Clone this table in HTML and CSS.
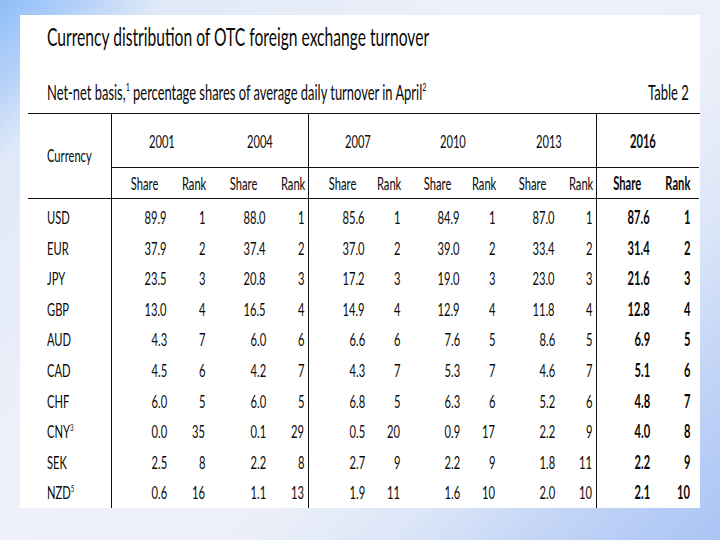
FILE: index.html
```html
<!DOCTYPE html>
<html lang="en">
<head>
<meta charset="utf-8">
<title>Currency distribution of OTC foreign exchange turnover</title>
<link rel="stylesheet" href="styles.css">
</head>
<body>
<div class="panel">
  <h1 class="title"><span class="sq">Currency distribution of OTC foreign exchange turnover</span></h1>
  <div class="sub">
    <span class="sq lt">Net-net basis,<sup>1</sup> percentage shares of average daily turnover in April<sup>2</sup></span>
    <span class="sq rt">Table 2</span>
  </div>
  <div class="table">
    <div class="head">
      <div class="cur"><span class="sq">Currency</span></div>
      <div class="yr"><span class="sq">2001</span></div>
      <div class="yr"><span class="sq">2004</span></div>
      <div class="yr"><span class="sq">2007</span></div>
      <div class="yr"><span class="sq">2010</span></div>
      <div class="yr"><span class="sq">2013</span></div>
      <div class="yr y16 b"><span class="sq">2016</span></div>
      <div class="hd"><span class="sq">Share</span></div><div class="hd k"><span class="sq">Rank</span></div>
      <div class="hd"><span class="sq">Share</span></div><div class="hd k"><span class="sq">Rank</span></div>
      <div class="hd"><span class="sq">Share</span></div><div class="hd k"><span class="sq">Rank</span></div>
      <div class="hd"><span class="sq">Share</span></div><div class="hd k"><span class="sq">Rank</span></div>
      <div class="hd"><span class="sq">Share</span></div><div class="hd k"><span class="sq">Rank</span></div>
      <div class="hd b"><span class="sq">Share</span></div><div class="hd k kl b"><span class="sq">Rank</span></div>
    </div>
    <div class="body">
      <div class="c"><span class="sq">USD</span></div>
      <div class="n"><span class="sq">89.9</span></div><div class="n"><span class="sq">1</span></div>
      <div class="n"><span class="sq">88.0</span></div><div class="n"><span class="sq">1</span></div>
      <div class="n"><span class="sq">85.6</span></div><div class="n"><span class="sq">1</span></div>
      <div class="n"><span class="sq">84.9</span></div><div class="n"><span class="sq">1</span></div>
      <div class="n"><span class="sq">87.0</span></div><div class="n"><span class="sq">1</span></div>
      <div class="n b"><span class="sq">87.6</span></div><div class="n nl b"><span class="sq">1</span></div>

      <div class="c"><span class="sq">EUR</span></div>
      <div class="n"><span class="sq">37.9</span></div><div class="n"><span class="sq">2</span></div>
      <div class="n"><span class="sq">37.4</span></div><div class="n"><span class="sq">2</span></div>
      <div class="n"><span class="sq">37.0</span></div><div class="n"><span class="sq">2</span></div>
      <div class="n"><span class="sq">39.0</span></div><div class="n"><span class="sq">2</span></div>
      <div class="n"><span class="sq">33.4</span></div><div class="n"><span class="sq">2</span></div>
      <div class="n b"><span class="sq">31.4</span></div><div class="n nl b"><span class="sq">2</span></div>

      <div class="c"><span class="sq">JPY</span></div>
      <div class="n"><span class="sq">23.5</span></div><div class="n"><span class="sq">3</span></div>
      <div class="n"><span class="sq">20.8</span></div><div class="n"><span class="sq">3</span></div>
      <div class="n"><span class="sq">17.2</span></div><div class="n"><span class="sq">3</span></div>
      <div class="n"><span class="sq">19.0</span></div><div class="n"><span class="sq">3</span></div>
      <div class="n"><span class="sq">23.0</span></div><div class="n"><span class="sq">3</span></div>
      <div class="n b"><span class="sq">21.6</span></div><div class="n nl b"><span class="sq">3</span></div>

      <div class="c"><span class="sq">GBP</span></div>
      <div class="n"><span class="sq">13.0</span></div><div class="n"><span class="sq">4</span></div>
      <div class="n"><span class="sq">16.5</span></div><div class="n"><span class="sq">4</span></div>
      <div class="n"><span class="sq">14.9</span></div><div class="n"><span class="sq">4</span></div>
      <div class="n"><span class="sq">12.9</span></div><div class="n"><span class="sq">4</span></div>
      <div class="n"><span class="sq">11.8</span></div><div class="n"><span class="sq">4</span></div>
      <div class="n b"><span class="sq">12.8</span></div><div class="n nl b"><span class="sq">4</span></div>

      <div class="c"><span class="sq">AUD</span></div>
      <div class="n"><span class="sq">4.3</span></div><div class="n"><span class="sq">7</span></div>
      <div class="n"><span class="sq">6.0</span></div><div class="n"><span class="sq">6</span></div>
      <div class="n"><span class="sq">6.6</span></div><div class="n"><span class="sq">6</span></div>
      <div class="n"><span class="sq">7.6</span></div><div class="n"><span class="sq">5</span></div>
      <div class="n"><span class="sq">8.6</span></div><div class="n"><span class="sq">5</span></div>
      <div class="n b"><span class="sq">6.9</span></div><div class="n nl b"><span class="sq">5</span></div>

      <div class="c"><span class="sq">CAD</span></div>
      <div class="n"><span class="sq">4.5</span></div><div class="n"><span class="sq">6</span></div>
      <div class="n"><span class="sq">4.2</span></div><div class="n"><span class="sq">7</span></div>
      <div class="n"><span class="sq">4.3</span></div><div class="n"><span class="sq">7</span></div>
      <div class="n"><span class="sq">5.3</span></div><div class="n"><span class="sq">7</span></div>
      <div class="n"><span class="sq">4.6</span></div><div class="n"><span class="sq">7</span></div>
      <div class="n b"><span class="sq">5.1</span></div><div class="n nl b"><span class="sq">6</span></div>

      <div class="c"><span class="sq">CHF</span></div>
      <div class="n"><span class="sq">6.0</span></div><div class="n"><span class="sq">5</span></div>
      <div class="n"><span class="sq">6.0</span></div><div class="n"><span class="sq">5</span></div>
      <div class="n"><span class="sq">6.8</span></div><div class="n"><span class="sq">5</span></div>
      <div class="n"><span class="sq">6.3</span></div><div class="n"><span class="sq">6</span></div>
      <div class="n"><span class="sq">5.2</span></div><div class="n"><span class="sq">6</span></div>
      <div class="n b"><span class="sq">4.8</span></div><div class="n nl b"><span class="sq">7</span></div>

      <div class="c"><span class="sq">CNY<sup>3</sup></span></div>
      <div class="n"><span class="sq">0.0</span></div><div class="n"><span class="sq">35</span></div>
      <div class="n"><span class="sq">0.1</span></div><div class="n"><span class="sq">29</span></div>
      <div class="n"><span class="sq">0.5</span></div><div class="n"><span class="sq">20</span></div>
      <div class="n"><span class="sq">0.9</span></div><div class="n"><span class="sq">17</span></div>
      <div class="n"><span class="sq">2.2</span></div><div class="n"><span class="sq">9</span></div>
      <div class="n b"><span class="sq">4.0</span></div><div class="n nl b"><span class="sq">8</span></div>

      <div class="c"><span class="sq">SEK</span></div>
      <div class="n"><span class="sq">2.5</span></div><div class="n"><span class="sq">8</span></div>
      <div class="n"><span class="sq">2.2</span></div><div class="n"><span class="sq">8</span></div>
      <div class="n"><span class="sq">2.7</span></div><div class="n"><span class="sq">9</span></div>
      <div class="n"><span class="sq">2.2</span></div><div class="n"><span class="sq">9</span></div>
      <div class="n"><span class="sq">1.8</span></div><div class="n"><span class="sq">11</span></div>
      <div class="n b"><span class="sq">2.2</span></div><div class="n nl b"><span class="sq">9</span></div>

      <div class="c"><span class="sq">NZD<sup>5</sup></span></div>
      <div class="n"><span class="sq">0.6</span></div><div class="n"><span class="sq">16</span></div>
      <div class="n"><span class="sq">1.1</span></div><div class="n"><span class="sq">13</span></div>
      <div class="n"><span class="sq">1.9</span></div><div class="n"><span class="sq">11</span></div>
      <div class="n"><span class="sq">1.6</span></div><div class="n"><span class="sq">10</span></div>
      <div class="n"><span class="sq">2.0</span></div><div class="n"><span class="sq">10</span></div>
      <div class="n b"><span class="sq">2.1</span></div><div class="n nl b"><span class="sq">10</span></div>
    </div>
  </div>
</div>
</body>
</html>
```
FILE: styles.css
```css
html, body {
  margin: 0;
  padding: 0;
}
body {
  width: 720px;
  height: 540px;
  box-sizing: border-box;
  padding-top: 15px;
  overflow: hidden;
  font-family: Lato, "Open Sans", sans-serif;
  color: #0a0a0a;
  background: linear-gradient(135deg, #8dbdf7 0%, #b6d2f8 7%, #e0e9f8 13%, #eef1f9 40%, #eceff9 62%, #dce6f8 74%, #c2d4f6 86%, #a9c4f5 100%);
}
.panel {
  margin-left: 20px;
  width: 680px;
  height: 493px;
  box-sizing: border-box;
  padding-top: 7px;
  background: #fff;
}
.sq {
  display: inline-block;
  white-space: nowrap;
  transform: scaleX(0.62);
  transform-origin: right center;
}
.title {
  margin: 0;
  padding-left: 27px;
  font-size: 25px;
  font-weight: 400;
  line-height: 28px;
}
.title .sq {
  transform: scaleX(0.625);
  transform-origin: left center;
}
.sub {
  display: flex;
  justify-content: space-between;
  margin-top: 29px;
  padding: 0 11px 0 27px;
  font-size: 21px;
  line-height: 26px;
}
.sub .lt {
  width: 0;
  transform: scaleX(0.615);
  transform-origin: left center;
}
.sub .rt {
  transform-origin: right center;
}
sup {
  font-size: 0.55em;
  line-height: 0;
  vertical-align: 0.75em;
}
.table {
  margin-left: 8px;
  margin-top: 8px;
  border-top: 1px solid #111;
  font-size: 18px;
  background:
    linear-gradient(#111, #111) 83px 0 / 1px 100% no-repeat,
    linear-gradient(#111, #111) 280px 0 / 1px 100% no-repeat,
    linear-gradient(#111, #111) 568px 0 / 1px 100% no-repeat;
}
.head,
.body {
  display: grid;
  grid-template-columns: 83px 60px 38px 61px 38px 61px 35px 60px 35px 60px 37px 58px 45px;
}
.head {
  grid-template-rows: 54px 31px;
}
.head > div {
  box-sizing: border-box;
  display: flex;
  align-items: center;
  border-bottom: 1px solid #111;
}
.head .cur {
  grid-row: 1 / 3;
  padding-left: 19px;
  padding-bottom: 2px;
}
.cur .sq {
  transform-origin: left center;
}
.head .yr {
  grid-column: span 2;
  justify-content: center;
  padding-left: 3px;
}
.head .y16 {
  padding-left: 0;
  padding-right: 9px;
}
.yr .sq {
  transform-origin: center center;
}
.head .hd {
  justify-content: flex-end;
  padding-right: 13px;
}
.head .hd.k {
  padding-right: 3px;
}
.head .hd.kl {
  padding-right: 9px;
}
.body {
  grid-auto-rows: 30.6px;
  padding-top: 3px;
}
.body > div {
  display: flex;
  align-items: center;
  line-height: 30.6px;
}
.body .c {
  padding-left: 19px;
}
.c .sq {
  transform-origin: left center;
}
.body .n {
  justify-content: flex-end;
  padding-right: 4px;
}
.body .nl {
  padding-right: 9px;
}
.b {
  font-weight: 700;
}
```
